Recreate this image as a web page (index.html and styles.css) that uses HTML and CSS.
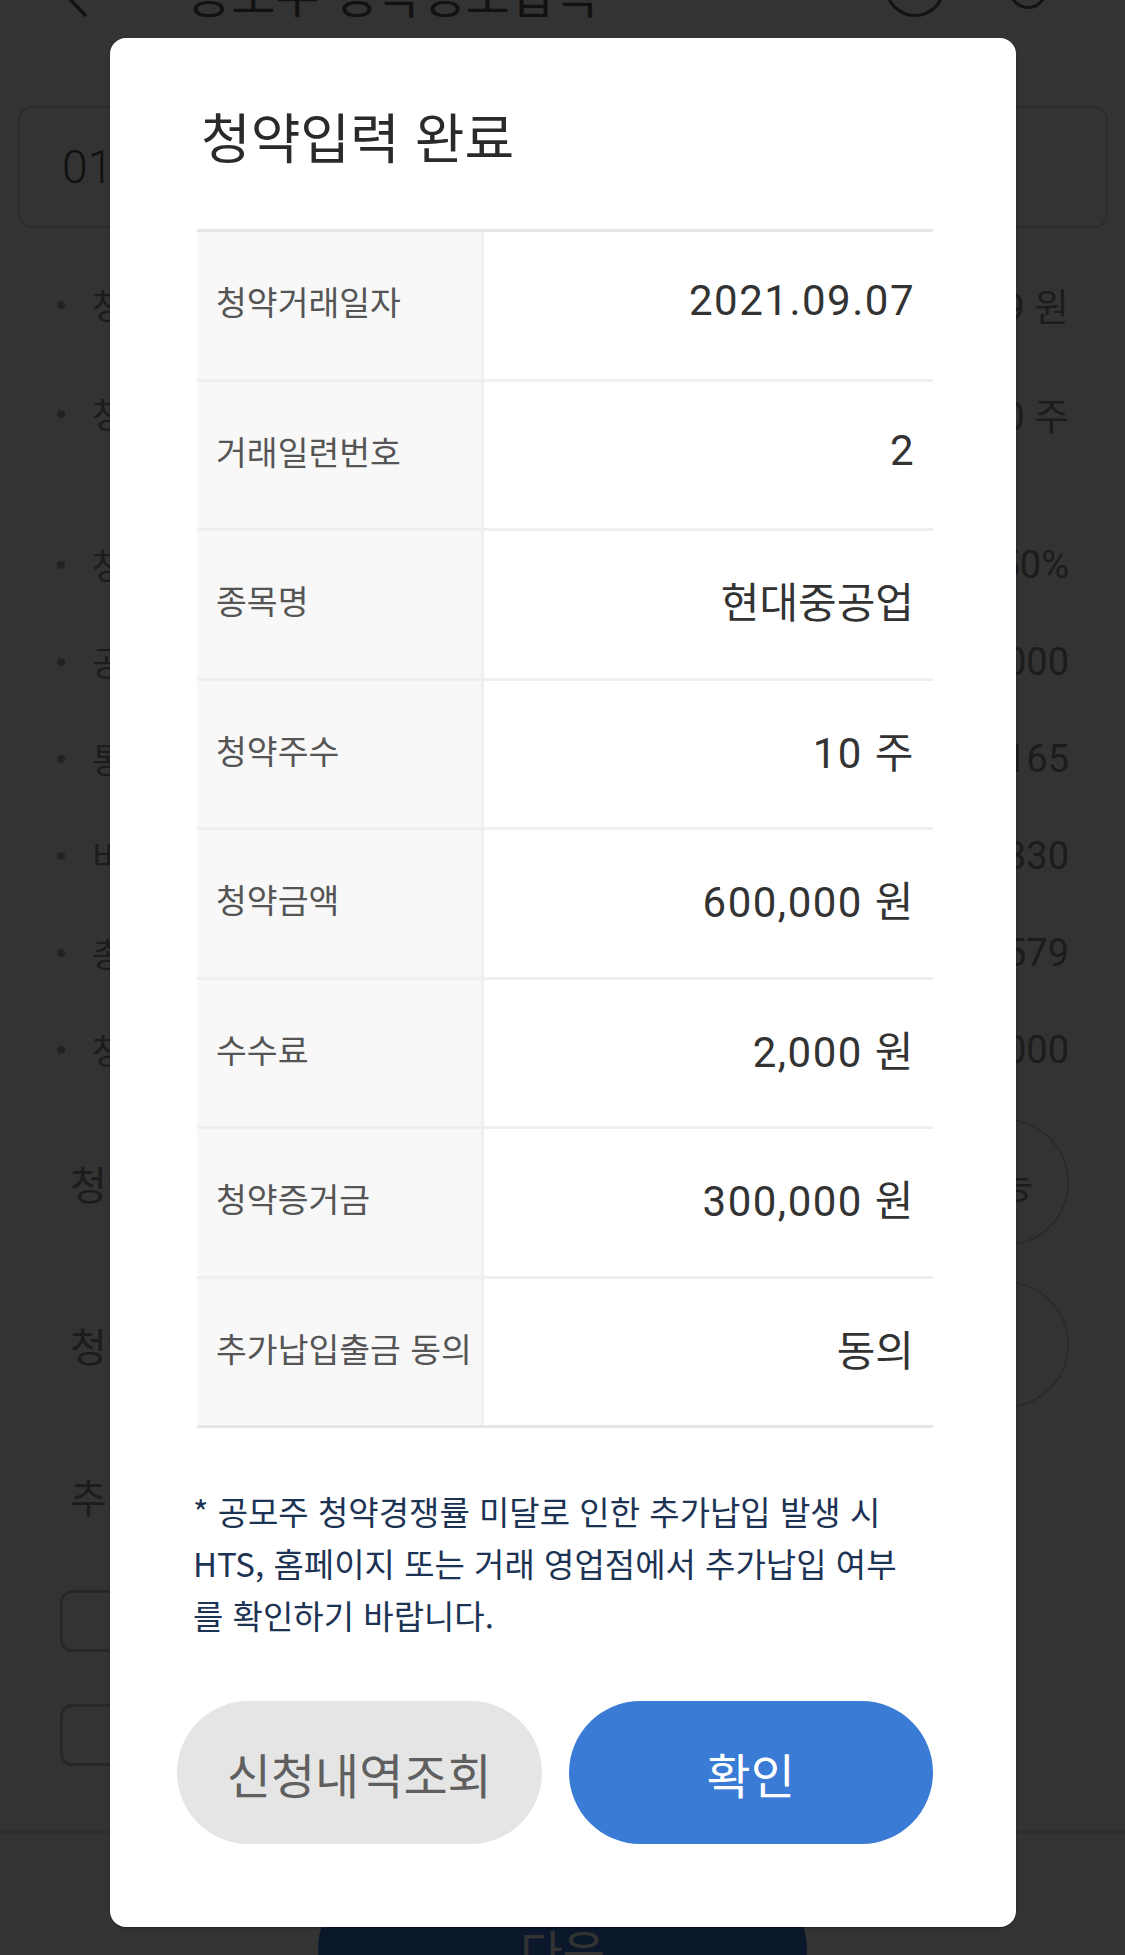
FILE: index.html
```html
<!DOCTYPE html>
<html lang="ko">
<head>
<meta charset="utf-8">
<title>청약입력 완료</title>
<link rel="stylesheet" href="styles.css">
</head>
<body>
<div class="screen">
  <div class="page">
    <header class="appbar">
      <svg class="back" viewBox="0 0 34 50" aria-hidden="true"><path d="M28 2 L6 25 L28 48" fill="none" stroke="#5a5a5a" stroke-width="3.5" stroke-linecap="round" stroke-linejoin="round"/></svg>
      <h1 class="appbar-title">공모주 청약정보입력</h1>
      <div class="appbar-icons">
        <span class="icon-circle icon-big"></span>
        <span class="icon-circle icon-small"></span>
      </div>
    </header>

    <div class="account-box"><span class="account-no">01</span></div>

    <ul class="info-list">
      <li class="info-row"><span class="info-label">청약가능금액</span><span class="info-value">3,452,179 원</span></li>
      <li class="info-row gap-s"><span class="info-label">청약가능수량</span><span class="info-value">1,000 주</span></li>
      <li class="info-row gap-l"><span class="info-label">청약증거금률</span><span class="info-value">50%</span></li>
      <li class="info-row"><span class="info-label">공모가</span><span class="info-value">60,000</span></li>
      <li class="info-row"><span class="info-label">통합청약한도</span><span class="info-value">12,165</span></li>
      <li class="info-row"><span class="info-label">비례청약한도</span><span class="info-value">24,330</span></li>
      <li class="info-row"><span class="info-label">총청약가능</span><span class="info-value">36,579</span></li>
      <li class="info-row"><span class="info-label">청약단위</span><span class="info-value">10,000</span></li>
    </ul>

    <div class="field-row">
      <span class="field-label">청약주수</span>
      <span class="field-pill">청약가능</span>
    </div>
    <div class="field-row second">
      <span class="field-label">청약금액</span>
      <span class="field-pill"></span>
    </div>

    <div class="section-label">추가납입출금 동의</div>
    <div class="check-row"><span class="checkbox"></span></div>
    <div class="check-row second"><span class="checkbox"></span></div>
  </div>

  <div class="bottom-bar">
    <button class="next-btn" type="button">다음</button>
  </div>

  <div class="dim"></div>

  <div class="modal" role="dialog">
    <h2 class="modal-title">청약입력 완료</h2>
    <div class="result-table">
      <div class="result-row"><div class="cell-label">청약거래일자</div><div class="cell-value">2021.09.07</div></div>
      <div class="result-row"><div class="cell-label">거래일련번호</div><div class="cell-value">2</div></div>
      <div class="result-row"><div class="cell-label">종목명</div><div class="cell-value text">현대중공업</div></div>
      <div class="result-row"><div class="cell-label">청약주수</div><div class="cell-value">10 주</div></div>
      <div class="result-row"><div class="cell-label">청약금액</div><div class="cell-value">600,000 원</div></div>
      <div class="result-row"><div class="cell-label">수수료</div><div class="cell-value">2,000 원</div></div>
      <div class="result-row"><div class="cell-label">청약증거금</div><div class="cell-value">300,000 원</div></div>
      <div class="result-row"><div class="cell-label">추가납입출금 동의</div><div class="cell-value text">동의</div></div>
    </div>
    <p class="notice">* 공모주 청약경쟁률 미달로 인한 추가납입 발생 시<br>HTS, 홈페이지 또는 거래 영업점에서 추가납입 여부<br>를 확인하기 바랍니다.</p>
    <div class="modal-actions">
      <button class="btn btn-gray" type="button">신청내역조회</button>
      <button class="btn btn-blue" type="button">확인</button>
    </div>
  </div>
</div>
</body>
</html>
```

FILE: styles.css
```css
* { box-sizing: border-box; margin: 0; padding: 0; }

html, body {
  width: 1125px;
  height: 1955px;
  overflow: hidden;
}

body {
  font-family: "Noto Sans CJK KR", "Noto Sans", sans-serif;
  background: #ffffff;
  color: #222;
}

.screen {
  position: relative;
  width: 1125px;
  height: 1955px;
  overflow: hidden;
  display: flex;
  flex-direction: column;
  background: #ffffff;
}

.page {
  flex: 1;
  overflow: hidden;
}

/* ---------- app bar (scrolled partly out of view) ---------- */
.appbar {
  height: 100px;
  margin-top: -58px;
  display: flex;
  align-items: center;
  padding-left: 57px;
  padding-right: 78px;
}

.back { width: 34px; height: 50px; flex: none; }

.appbar-title {
  margin-left: 96px;
  font-size: 48px;
  font-weight: 400;
  color: #5a5a5a;
  white-space: nowrap;
}

.appbar-icons {
  margin-left: auto;
  align-self: flex-start;
  display: flex;
  align-items: flex-start;
  gap: 64px;
}

.icon-circle {
  display: block;
  border: 3.5px solid #5a5a5a;
  border-radius: 50%;
}
.icon-big { width: 60px; height: 60px; margin-top: 15px; }
.icon-small { width: 38px; height: 38px; margin-top: 29px; }

/* ---------- account box ---------- */
.account-box {
  margin: 64px 17px 0 18px;
  height: 122px;
  border: 2px solid #d8d8d8;
  border-radius: 14px;
  display: flex;
  align-items: center;
  padding-left: 42px;
}

.account-no {
  font-family: Roboto, "Noto Sans CJK KR", sans-serif;
  font-weight: 300;
  font-size: 46px;
  color: #555;
}

/* ---------- info list ---------- */
.info-list {
  list-style: none;
  margin-top: 28px;
}

.info-row {
  height: 97px;
  display: flex;
  align-items: center;
  padding: 0 56px 0 57px;
}
.info-row.gap-s { margin-top: 12px; }
.info-row.gap-l { margin-top: 54px; }

.info-row::before {
  content: "";
  width: 8px;
  height: 8px;
  border-radius: 50%;
  background: #a8a8a8;
  flex: none;
}

.info-label {
  margin-left: 27px;
  font-size: 34px;
  color: #8a8a8a;
}

.info-value {
  margin-left: auto;
  font-family: Roboto, "Noto Sans CJK KR", sans-serif;
  font-size: 38px;
  color: #8a8a8a;
}

/* ---------- form fields ---------- */
.field-row {
  height: 127px;
  margin-top: 21px;
  display: flex;
  align-items: center;
  justify-content: space-between;
  padding: 0 56px 0 70px;
}
.field-row.second { margin-top: 35px; }

.field-label {
  font-size: 40px;
  color: #8a8a8a;
}

.field-pill {
  width: 480px;
  height: 127px;
  border: 2px solid #cfcfcf;
  border-radius: 64px;
  display: flex;
  align-items: center;
  justify-content: flex-end;
  padding-right: 34px;
  font-size: 36px;
  color: #8a8a8a;
}

.section-label {
  margin-top: 58px;
  height: 60px;
  line-height: 60px;
  padding-left: 70px;
  font-size: 40px;
  color: #8a8a8a;
}

.check-row {
  margin-top: 64px;
  padding-left: 60px;
}
.check-row.second { margin-top: 52px; }

.checkbox {
  display: block;
  width: 62px;
  height: 62px;
  border: 3px solid #c4c4c4;
  border-radius: 12px;
}

/* ---------- bottom bar ---------- */
.bottom-bar {
  height: 124px;
  flex: none;
  border-top: 2px solid #dedede;
  display: flex;
  justify-content: center;
}

.next-btn {
  margin-top: 46px;
  width: 489px;
  height: 140px;
  border: none;
  border-radius: 70px;
  background: #3a7bd5;
  color: #ffffff;
  font-family: "Noto Sans CJK KR", sans-serif;
  font-size: 46px;
  flex: none;
}

/* ---------- dim overlay ---------- */
.dim {
  position: absolute;
  inset: 0;
  background: rgba(0, 0, 0, 0.8);
}

/* ---------- modal ---------- */
.modal {
  position: absolute;
  top: 38px;
  left: 110px;
  width: 906px;
  height: 1889px;
  background: #ffffff;
  border-radius: 16px;
  padding: 68px 83px 0 87px;
  box-shadow: 0 1px 2px rgba(0, 0, 0, 0.35);
}

.modal-title {
  margin-left: 4px;
  font-size: 54px;
  line-height: 60px;
  font-weight: 400;
  color: #2a2a2a;
  white-space: nowrap;
}

.result-table {
  margin-top: 63px;
  border-top: 3px solid #e6e6e6;
  border-bottom: 3px solid #e6e6e6;
}

.result-row {
  display: grid;
  grid-template-columns: 287px 1fr;
  height: 146.5px;
}
.result-row + .result-row {
  border-top: 3px solid #efefef;
  height: 149.5px;
}

.cell-label {
  background: #f8f8f8;
  border-right: 3px solid #efefef;
  display: flex;
  align-items: center;
  padding: 0 0 9px 19px;
  font-size: 33.5px;
  color: #555555;
  white-space: nowrap;
}

.cell-value {
  display: flex;
  align-items: center;
  justify-content: flex-end;
  padding: 0 18px 9px 0;
  font-family: Roboto, "Noto Sans CJK KR", sans-serif;
  font-size: 42px;
  letter-spacing: 1.5px;
  color: #333333;
  white-space: nowrap;
}
.cell-value.text {
  letter-spacing: 0;
  padding-right: 19px;
}

.notice {
  margin-top: 57px;
  margin-left: -4px;
  font-size: 33px;
  line-height: 52px;
  color: #1d3354;
  white-space: nowrap;
}

.modal-actions {
  margin-top: 60px;
  margin-left: -20px;
  display: flex;
  gap: 27px;
}

.btn {
  width: 366px;
  height: 143px;
  border: none;
  border-radius: 72px;
  font-family: "Noto Sans CJK KR", sans-serif;
  font-size: 48px;
  font-weight: 400;
}
.btn-gray { background: #e5e5e5; color: #5f5f5f; }
.btn-blue { background: #3a7bd5; color: #ffffff; }
```
